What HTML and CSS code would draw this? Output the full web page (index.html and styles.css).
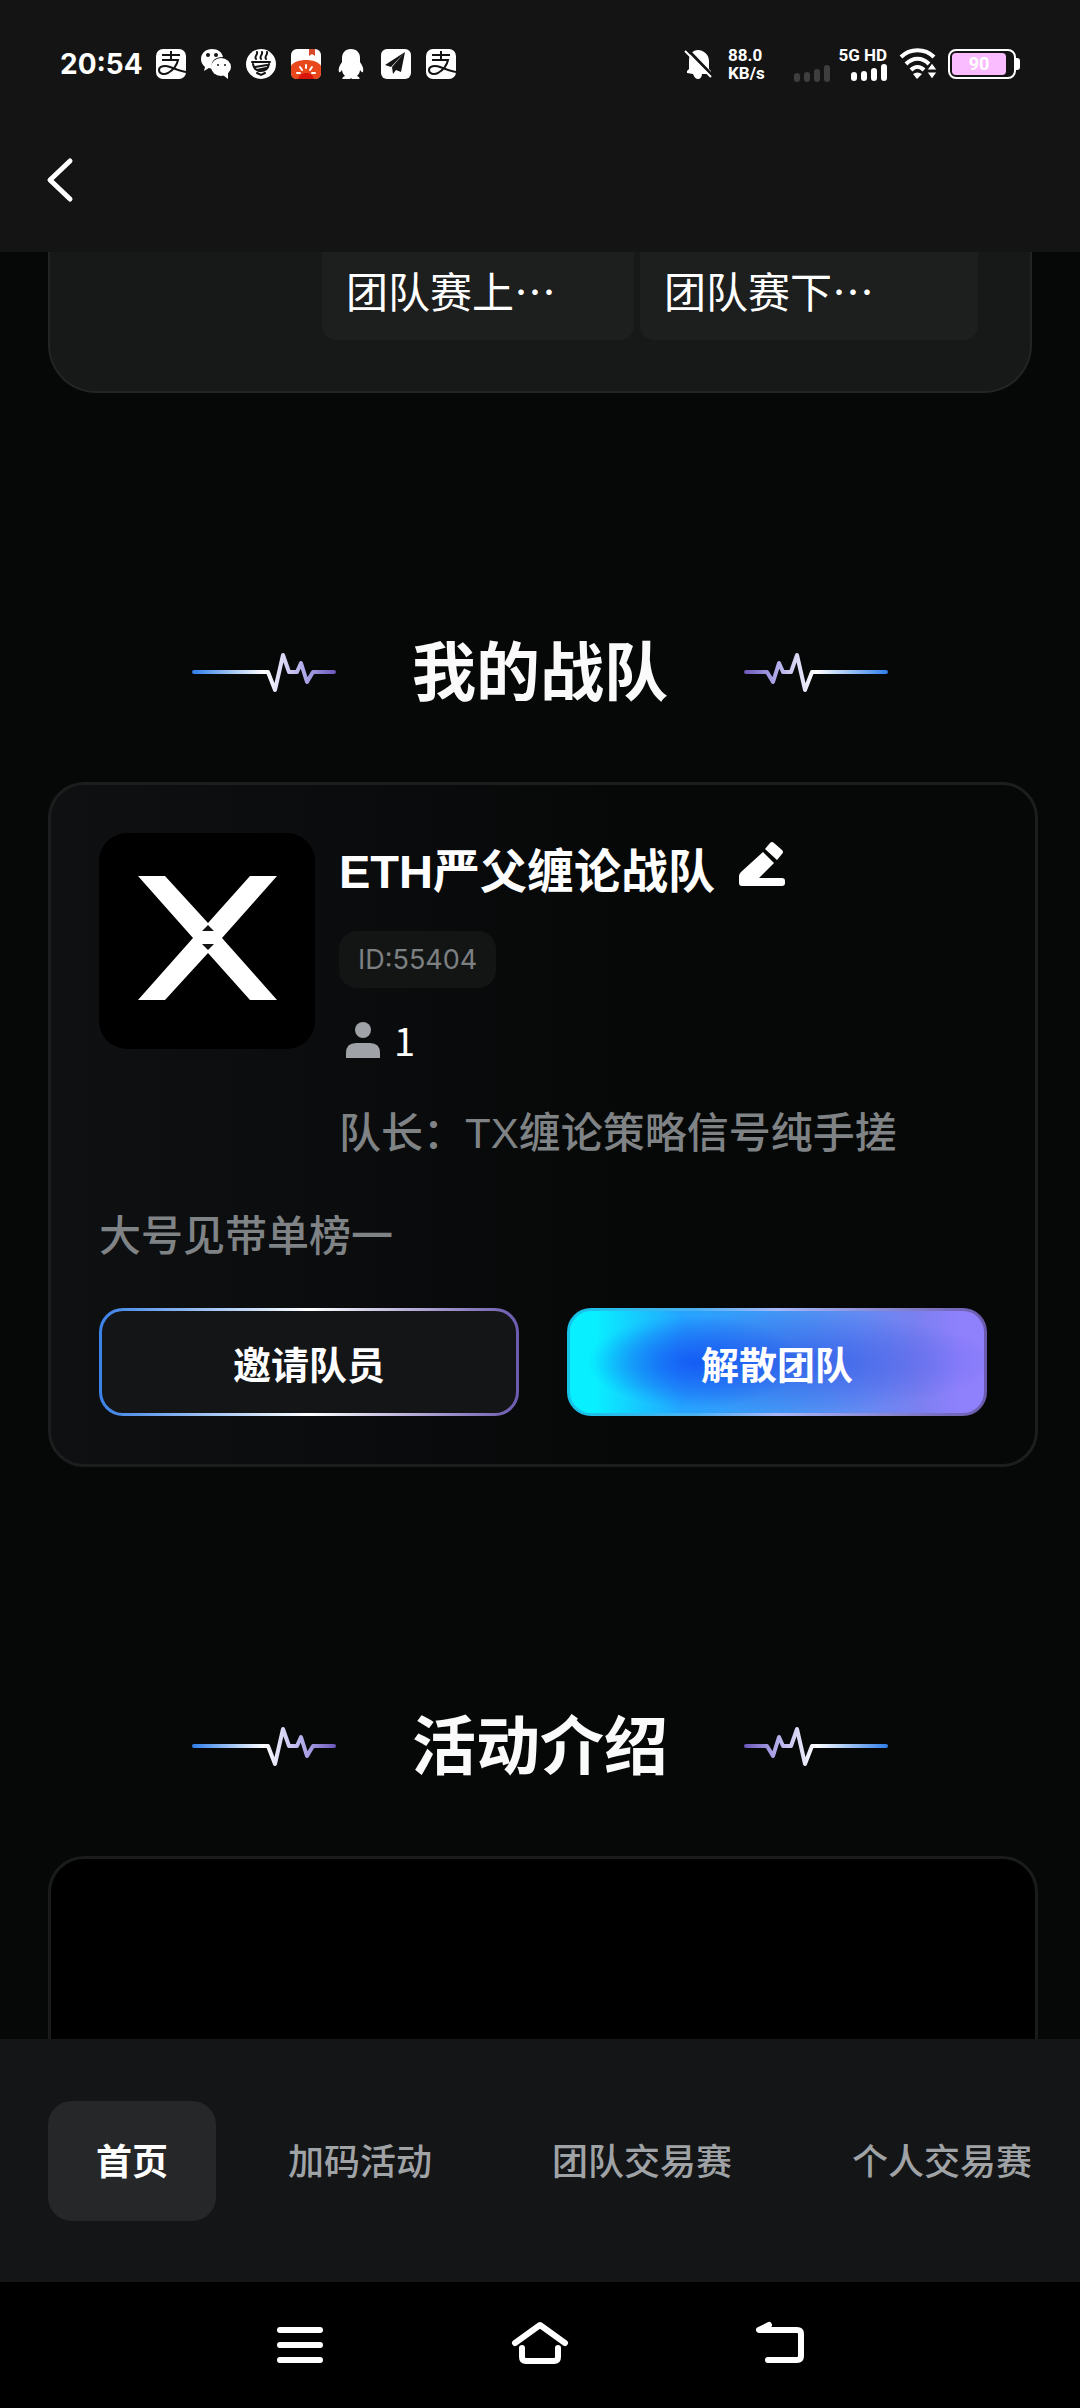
FILE: index.html
```html
<!DOCTYPE html>
<html lang="zh-CN">
<head>
<meta charset="utf-8">
<meta name="viewport" content="width=device-width, initial-scale=1">
<title>我的战队</title>
<link rel="stylesheet" href="styles.css">
</head>
<body>
<svg class="defs" width="0" height="0" aria-hidden="true">
  <defs>
    <linearGradient id="pulse-stroke" gradientUnits="userSpaceOnUse" x1="0" y1="0" x2="144" y2="0">
      <stop offset="0" stop-color="#2f7de8"/>
      <stop offset=".5" stop-color="#ffffff"/>
      <stop offset=".8" stop-color="#a9a2e6"/>
      <stop offset="1" stop-color="#6a55b8"/>
    </linearGradient>
    <symbol id="pulse" viewBox="0 0 144 48">
      <path d="M2 23H76L83 41L91 6L97 23H105L109 14L115 33L121 23H142" fill="none" stroke="url(#pulse-stroke)" stroke-width="4" stroke-linecap="round" stroke-linejoin="round"/>
    </symbol>
    <symbol id="pay" viewBox="0 0 30 30">
      <rect width="30" height="30" rx="7" fill="#fff"/>
      <path d="M6 6H24M15 2V11M6 11H22C21 16 17 21 12 24C8 26 3 25 3 21C3 17 9 16 14 18C19 20 24 22 30 23" fill="none" stroke="#141414" stroke-width="2"/>
    </symbol>
  </defs>
</svg>
<div class="screen">
  <header class="top">
    <div class="status">
      <time class="clock">20:54</time>
      <div class="apps">
        <svg width="30" height="30"><use href="#pay"/></svg>
        <svg width="30" height="30" viewBox="0 0 30 30">
          <path d="M11 0C5 0 0 4 0 10C0 14 2 16 4 18L3 22L8 19L11 20C9 12 14 8 22 8C21 3 17 0 11 0Z" fill="#fff"/>
          <ellipse cx="20" cy="18" rx="10" ry="9" fill="#fff"/>
          <path d="M22 26L27 30V24Z" fill="#fff"/>
          <g fill="#141414"><circle cx="7" cy="6" r="2"/><circle cx="15" cy="6" r="2"/><circle cx="17" cy="16" r="1"/><circle cx="24" cy="16" r="1"/></g>
        </svg>
        <svg width="30" height="30" viewBox="0 0 30 30">
          <circle cx="15" cy="15" r="15" fill="#fff"/>
          <path d="M10 10C8 7 12 6 11 3M15 10C13 7 17 6 16 3M20 10C18 7 22 6 21 3M6 13H24M7 15C8 20 11 22 15 22S22 20 23 15M9 18L21 16M11 21L20 19M11 24L15 26L19 24" fill="none" stroke="#141414" stroke-width="2" stroke-linecap="round"/>
        </svg>
        <svg width="30" height="30" viewBox="0 0 30 30">
          <rect width="30" height="30" rx="6" fill="#fff"/>
          <path d="M18 0H24V7L21 5L18 7Z" fill="#d8492c"/>
          <path d="M0 17C4 9 26 9 30 17V24Q30 30 24 30H6Q0 30 0 24Z" fill="#e8481c"/>
          <path d="M7 30C9 22 21 22 23 30Z" fill="#d8150c"/>
          <path d="M15 16V19M9 18L11 21M21 18L19 21M6 24H9M21 24H24" stroke="#fff" stroke-width="2" stroke-linecap="round"/>
        </svg>
        <svg width="30" height="30" viewBox="0 0 30 30">
          <path d="M15 0C9 0 6 4 6 9V13C4 16 2 19 3 23C4 24 5 22 6 21C6 24 8 26 9 27C6 28 6 30 7 30H14L15 29L16 30H23C24 30 24 28 21 27C22 26 24 24 24 21C25 22 26 24 27 23C28 19 26 16 24 13V9C24 4 21 0 15 0Z" fill="#fff"/>
        </svg>
        <svg width="30" height="30" viewBox="0 0 30 30">
          <rect width="30" height="30" rx="6" fill="#fff"/>
          <path d="M24 3L4 16L10 18Z M24 3L11 18L12 25L15 21L20 23Z" fill="#141414"/>
        </svg>
        <svg width="30" height="30"><use href="#pay"/></svg>
      </div>
      <div class="system">
        <svg class="bell" width="30" height="30" viewBox="0 0 30 30">
          <path d="M3 24V22L5 20V12C5 5 9 1 14 1S25 5 25 12V20L27 22V25H18C18 28 16 30 14 30S10 28 9 25Z" fill="#fff"/>
          <path d="M2 -1L29 27" stroke="#141414" stroke-width="3"/>
          <path d="M1 2L27 28" stroke="#fff" stroke-width="2"/>
        </svg>
        <div class="speed"><span>88.0</span><span>KB/s</span></div>
        <svg class="sim sim-off" width="36" height="17" viewBox="0 0 36 17">
          <path d="M3 11V14M13 10V14M23 7V14M33 3V14" stroke="#3e3e3e" stroke-width="6" stroke-linecap="round"/>
        </svg>
        <div class="net">
          <span>5G HD</span>
          <svg class="sim" width="36" height="17" viewBox="0 0 36 17">
            <path d="M3 11V14M13 10V14M23 7V14M33 3V14" stroke="#fff" stroke-width="6" stroke-linecap="round"/>
          </svg>
        </div>
        <svg class="wifi" width="38" height="30" viewBox="0 0 38 30">
          <path d="M2 8C11 -1 26 -1 35 8M7 15C14 8 23 8 30 15M12 21C16 17 21 17 25 21" fill="none" stroke="#fff" stroke-width="4"/>
          <path d="M14 25L18 30L23 25C20 23 17 23 14 25Z" fill="#fff"/>
          <path d="M33 14L38 21H28ZM33 30L38 23H28Z" fill="#fff" stroke="#141414"/>
        </svg>
        <div class="battery"><span class="level">90</span></div>
      </div>
    </div>
    <button class="back" type="button" aria-label="返回">
      <svg width="28" height="44" viewBox="0 0 28 44"><path d="M24 3L4 22L24 41" fill="none" stroke="#fff" stroke-width="5" stroke-linecap="round" stroke-linejoin="round"/></svg>
    </button>
  </header>

  <main class="content">
    <section class="schedule">
      <div class="stage">团队赛上⋯</div>
      <div class="stage stage-wide">团队赛下⋯</div>
    </section>

    <div class="heading">
      <svg width="144" height="48"><use href="#pulse"/></svg>
      <h2>我的战队</h2>
      <svg class="flip" width="144" height="48"><use href="#pulse"/></svg>
    </div>

    <section class="team">
      <div class="profile">
        <svg class="avatar" viewBox="0 0 216 216" role="img" aria-label="X">
          <rect width="216" height="216" fill="#000"/>
          <path d="M39 43H66L109 90L151 43H178L123 105L178 167H151L109 120L66 167H39L94 105Z" fill="#fff"/>
          <path d="M103 98L109 92L115 98ZM103 111L109 117L115 111Z" fill="#141414"/>
        </svg>
        <div class="info">
          <div class="name-row">
            <h3>ETH严父缠论战队</h3>
            <button class="edit" type="button" aria-label="编辑">
              <svg width="46" height="46" viewBox="0 0 46 46"><path d="M24 11L35 22L20 37H43Q46 37 46 40V42Q46 45 43 45H3Q0 45 0 42V35Q0 33 2 31ZM31 2Q33 0 35 2L43 9Q45 11 43 13L38 19L26 8Z" fill="#fff"/></svg>
            </button>
          </div>
          <span class="team-id">ID:55404</span>
          <div class="members">
            <svg width="34" height="36" viewBox="0 0 34 36"><circle cx="17" cy="8" r="8" fill="#9fa2a6"/><path d="M0 36V31Q0 21 10 21H24Q34 21 34 31V36Q34 36 32 36H2Z" fill="#9fa2a6"/></svg>
            <span>1</span>
          </div>
          <p class="captain">队长：TX缠论策略信号纯手搓</p>
        </div>
      </div>
      <p class="slogan">大号见带单榜一</p>
      <div class="actions">
        <button class="btn invite" type="button">邀请队员</button>
        <button class="btn disband" type="button">解散团队</button>
      </div>
    </section>

    <div class="heading">
      <svg width="144" height="48"><use href="#pulse"/></svg>
      <h2>活动介绍</h2>
      <svg class="flip" width="144" height="48"><use href="#pulse"/></svg>
    </div>

    <section class="intro"></section>
  </main>

  <nav class="tabs">
    <a class="tab active" href="#home">首页</a>
    <a class="tab" href="#bonus">加码活动</a>
    <a class="tab" href="#team">团队交易赛</a>
    <a class="tab" href="#solo">个人交易赛</a>
  </nav>

  <footer class="keys">
    <button type="button" aria-label="最近任务">
      <svg width="48" height="44" viewBox="0 0 48 44"><path d="M4 7H44M4 22H44M4 37H44" stroke="#fff" stroke-width="6" stroke-linecap="round"/></svg>
    </button>
    <button type="button" aria-label="主页">
      <svg width="58" height="44" viewBox="0 0 58 44"><path d="M4 20L29 2L54 20M11 25V34Q11 38 15 38H43Q47 38 47 34V25" fill="none" stroke="#fff" stroke-width="6" stroke-linecap="round" stroke-linejoin="round"/></svg>
    </button>
    <button type="button" aria-label="后退">
      <svg width="50" height="44" viewBox="0 0 50 44"><path d="M14 2L4 7H42Q46 7 46 11V33Q46 37 42 37H13" fill="none" stroke="#fff" stroke-width="6" stroke-linecap="round" stroke-linejoin="round"/></svg>
    </button>
  </footer>
</div>
</body>
</html>
```

FILE: styles.css
```css
* { box-sizing: border-box; }

body {
  margin: 0;
  background: #060808;
  color: #fff;
  font-family: "Liberation Sans", "Noto Sans CJK SC", sans-serif;
}

h2, h3, p { margin: 0; }
svg { display: block; flex: none; overflow: visible; }
.defs { position: absolute; }

button {
  padding: 0;
  border: 0;
  background: none;
  color: inherit;
  font: inherit;
}

.screen {
  display: flex;
  flex-direction: column;
  height: 100vh;
}

/* Status bar and page header */
.top {
  flex: none;
  height: 252px;
  background: #141414;
}

.status {
  display: flex;
  align-items: center;
  height: 128px;
  padding: 0 64px 0 60px;
}

.clock {
  width: 96px;
  font: 700 28px/32px Inter, sans-serif;
}

.apps {
  display: flex;
  gap: 15px;
}

.system {
  display: flex;
  align-items: center;
  margin-left: auto;
  font-family: Roboto, sans-serif;
  font-weight: 700;
}

.speed {
  display: flex;
  flex-direction: column;
  width: 38px;
  margin: 0 28px 0 14px;
  font-size: 17px;
  line-height: 18px;
}

.sim-off { align-self: flex-end; }

.net {
  display: flex;
  flex-direction: column;
  align-items: flex-end;
  width: 48px;
  margin: 0 12px 0 9px;
  font-size: 17px;
  line-height: 17px;
  white-space: nowrap;
}

.battery {
  position: relative;
  width: 68px;
  height: 30px;
  margin-left: 11px;
  padding: 2px;
  border: 2px solid #fff;
  border-radius: 8px;
}

.battery::after {
  content: "";
  position: absolute;
  top: 7px;
  right: -6px;
  width: 4px;
  height: 12px;
  border-radius: 0 3px 3px 0;
  background: #fff;
}

.level {
  display: block;
  width: 54px;
  border-radius: 4px;
  background: #fbbcff;
  font-size: 18px;
  line-height: 22px;
  text-align: center;
}

.back { margin: 30px 0 0 46px; }

.content {
  flex: 1;
  min-height: 0;
  overflow: hidden;
  padding: 0 42px 0 48px;
}

.schedule {
  display: flex;
  justify-content: flex-end;
  gap: 6px;
  margin-right: 6px;
  padding: 0 52px 51px 0;
  border: 2px solid #232525;
  border-top: 0;
  border-radius: 0 0 48px 48px;
  background: #171818;
}

.stage {
  width: 312px;
  height: 88px;
  padding: 8px 24px;
  border-radius: 0 0 14px 14px;
  background: #1d1e1e;
  font: 400 42px/60px "Noto Sans CJK SC", sans-serif;
}

.stage-wide { width: 338px; }

.heading {
  display: flex;
  justify-content: center;
  align-items: center;
  gap: 76px;
  height: 96px;
  margin: 232px 0 61px;
  padding-right: 6px;
}

.heading h2 {
  font-size: 64px;
  font-weight: 700;
  line-height: 96px;
  color: #fafafa;
}

.flip { transform: scaleX(-1); }

.team {
  padding: 48px;
  border: 3px solid #1c1e1e;
  border-radius: 36px;
  background: linear-gradient(90deg, #0e1012, #060808 60%);
}

.profile {
  display: flex;
  gap: 24px;
}

.avatar {
  width: 216px;
  height: 216px;
  border-radius: 28px;
  overflow: hidden;
}

.info {
  display: flex;
  flex: 1;
  flex-direction: column;
  align-items: flex-start;
}

.name-row {
  display: flex;
  align-items: center;
  gap: 24px;
  height: 78px;
}

.name-row h3 {
  font-size: 47px;
  font-weight: 700;
  line-height: 78px;
}

.edit { margin-bottom: 16px; }

.team-id {
  margin-top: 20px;
  padding: 1px 19px 0;
  border-radius: 18px;
  background: #131515;
  color: #7d8082;
  font-family: Inter, sans-serif;
  font-size: 27px;
  line-height: 56px;
}

.members {
  display: flex;
  align-items: center;
  gap: 14px;
  height: 56px;
  margin: 24px 0 0 7px;
  font: 400 38px/56px "Noto Sans CJK SC", sans-serif;
}

.captain, .slogan {
  color: #7f8385;
  font-size: 42px;
  font-weight: 500;
  line-height: 62px;
}

.captain { margin-top: 35px; }
.slogan { margin-top: 41px; }

.actions {
  display: grid;
  grid-template-columns: 1fr 1fr;
  gap: 48px;
  margin-top: 40px;
}

.btn {
  height: 108px;
  border: 3px solid transparent;
  border-radius: 24px;
  font-size: 38px;
  font-weight: 700;
}

.invite {
  background:
    linear-gradient(#141517, #141517) padding-box,
    linear-gradient(90deg, #3b82e8, #fff 50%, #6b5aae) border-box;
}

.disband {
  background:
    radial-gradient(ellipse 26% 46% at 30% 50%, rgba(15, 80, 245, .75), rgba(15, 80, 245, 0)) padding-box,
    radial-gradient(ellipse 48% 50% at 54% 50%, rgba(40, 70, 225, .6), rgba(40, 70, 225, 0)) padding-box,
    linear-gradient(90deg, #08f0ff 6%, #24a4ff 27%, #4a94f4 55%, #7b80f0 84%, #8f80fc 94%) padding-box,
    linear-gradient(90deg, #14c4e8, #4ab0f0 30%, #a8b8f8 50%, #6b5aae) border-box;
}

.intro {
  height: 480px;
  border: 3px solid #1a1c1c;
  border-radius: 36px;
  background: #000;
}

/* Page tabs */
.tabs {
  display: flex;
  flex: none;
  align-items: center;
  gap: 24px;
  height: 243px;
  padding-left: 48px;
  overflow: hidden;
  background: #141517;
}

.tab {
  flex: none;
  padding: 4px 48px 0;
  border-radius: 24px;
  color: #a0a3a6;
  font-size: 36px;
  font-weight: 500;
  line-height: 116px;
  text-decoration: none;
}

.tab.active {
  background: #262729;
  color: #fff;
  font-weight: 700;
}

/* System keys */
.keys {
  display: flex;
  flex: none;
  justify-content: center;
  align-items: center;
  height: 126px;
  background: #000;
}

.keys button {
  display: flex;
  justify-content: center;
  width: 240px;
}
```
